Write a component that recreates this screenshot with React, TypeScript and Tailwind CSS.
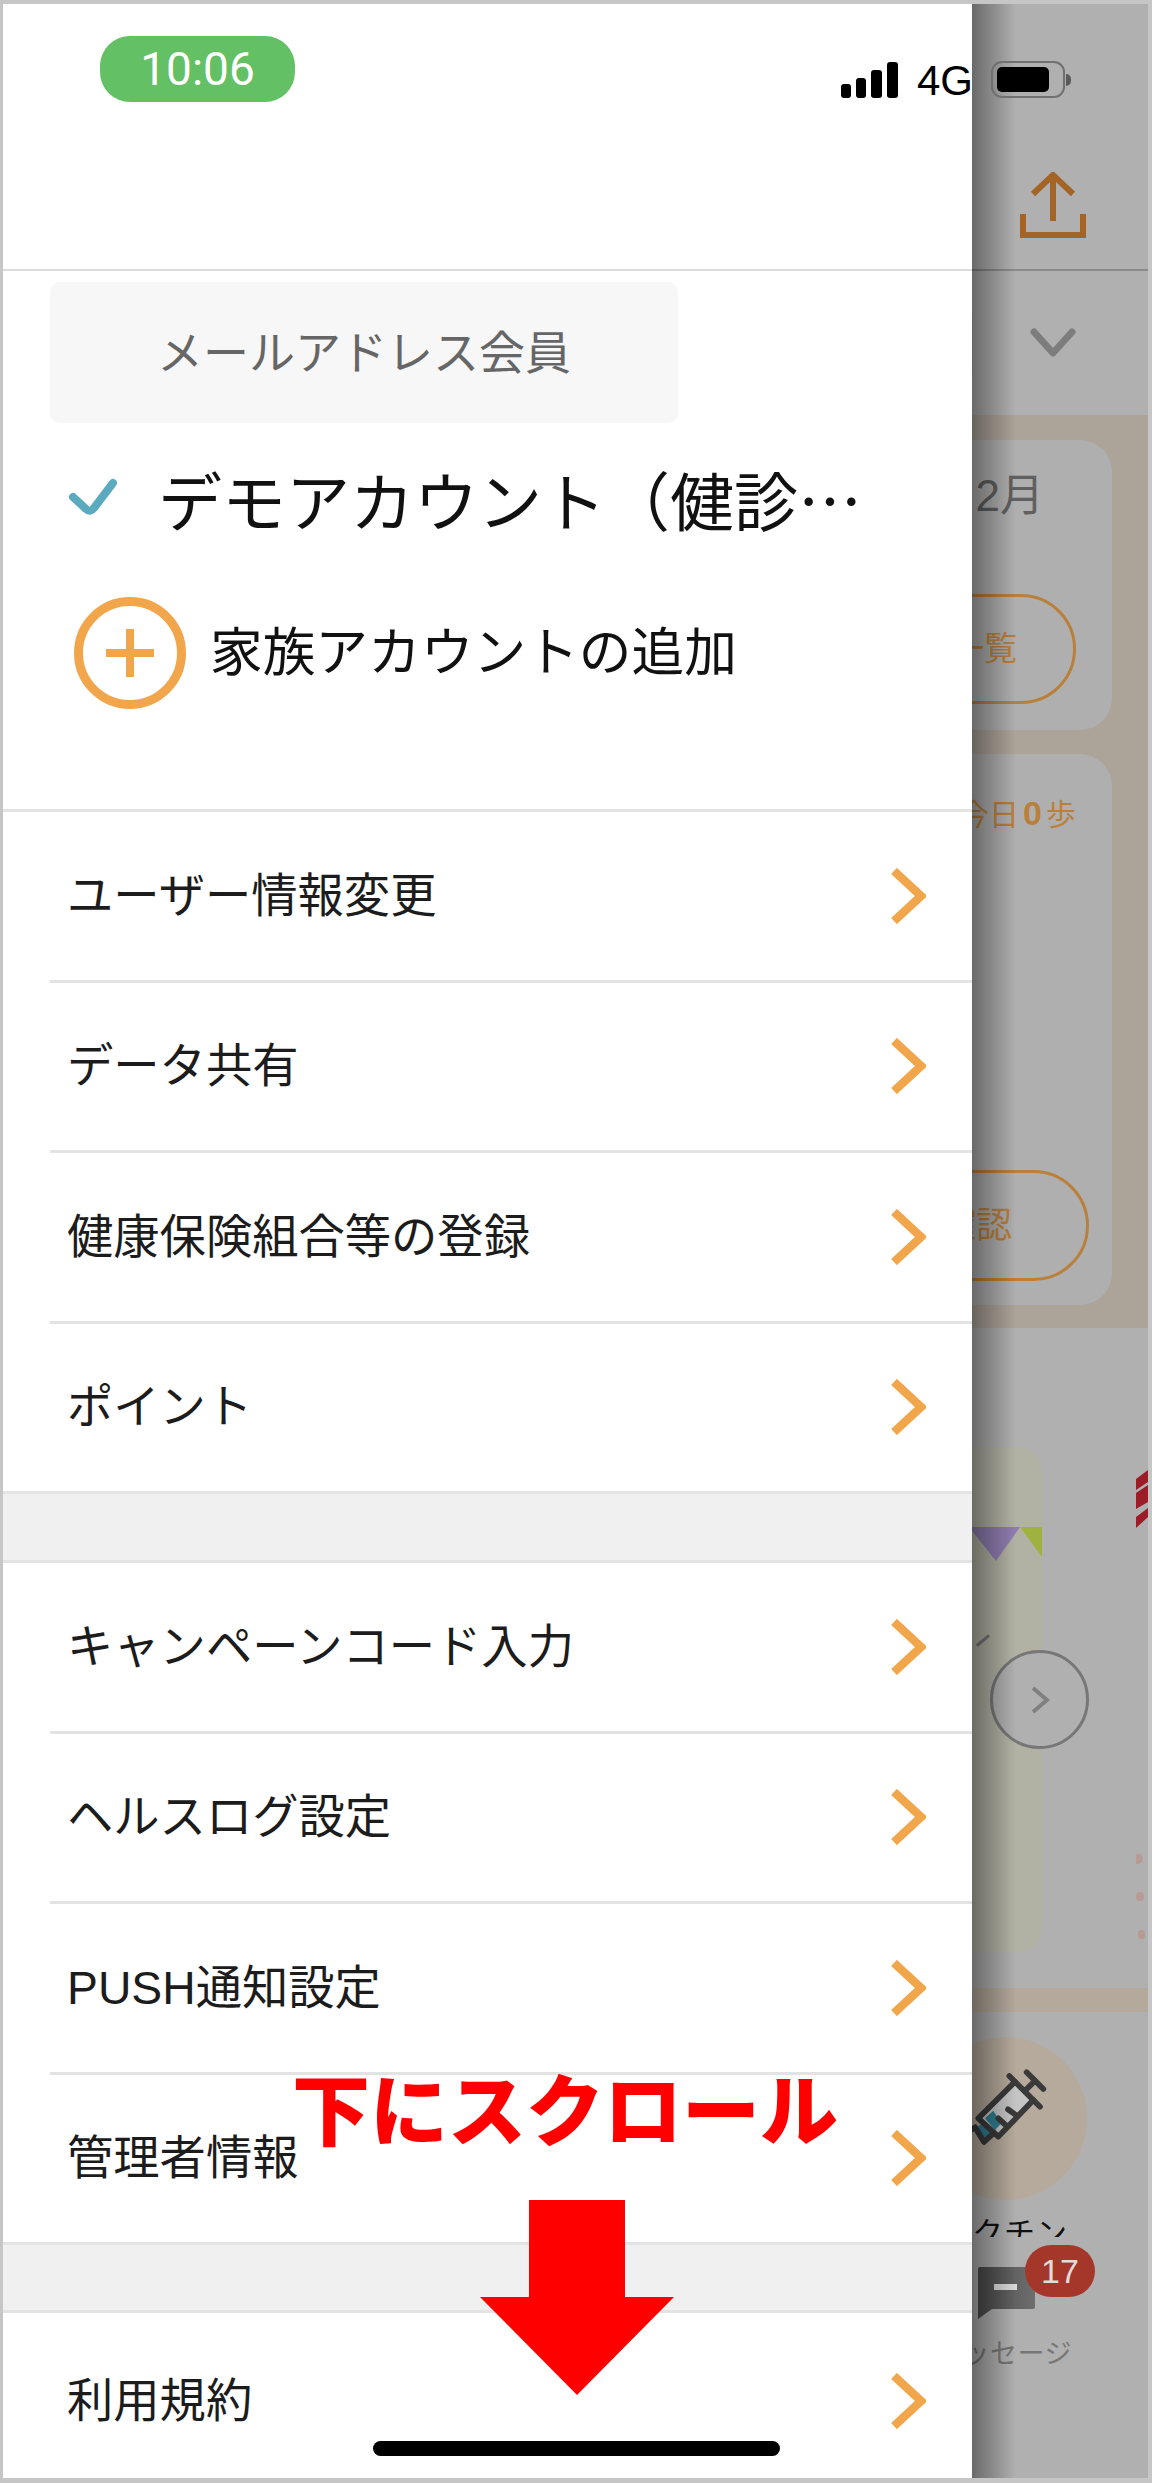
const sans = "font-['Liberation_Sans','Noto_Sans_CJK_JP',sans-serif]";

function Chevron() {
  return (
    <svg width="36" height="56" viewBox="0 0 36 56" fill="none" className="shrink-0">
      <path d="M4 3 L31 28 L4 53" stroke="#f2a64b" strokeWidth="8.5" />
    </svg>
  );
}

function Row({ label, full = false, last = false }: { label: string; full?: boolean; last?: boolean }) {
  return (
    <div className={full ? "" : "pl-[47px]"}>
      <div
        className={`flex items-center justify-between ${last ? "h-[176px]" : "h-[170.5px] border-b-[3px] border-[#e3e3e3]"} ${full ? "pl-[64px]" : "pl-[17px]"} pr-[46px]`}
      >
        <span className="text-[46.3px] leading-none text-[#1c1c1c]">{label}</span>
        <Chevron />
      </div>
    </div>
  );
}

function Background() {
  return (
    <div className={`flex h-full flex-col bg-[#b0b0b0] ${sans}`}>
      {/* header */}
      <div className="flex h-[267px] shrink-0 items-end justify-end border-b-[2px] border-[#8a8a8a] pb-[31px] pr-[62px]">
        <svg width="66" height="66" viewBox="0 0 66 66" fill="none" stroke="#a36426" strokeWidth="6">
          <path d="M33 3 V49 M13 22 L33 3 L53 22" />
          <path d="M3 42 V63 H63 V42" />
        </svg>
      </div>
      {/* selector */}
      <div className="flex h-[144px] shrink-0 items-center justify-between pr-[72px]">
        <div className="ml-[920px] h-[98px] w-[50px] rounded-full bg-[#a6a6a6]" />
        <svg width="46" height="30" viewBox="0 0 46 30" fill="none" stroke="#7d7d7d" strokeWidth="7" strokeLinecap="round" strokeLinejoin="round">
          <path d="M4 4 L23 25 L42 4" />
        </svg>
      </div>
      {/* beige summary section */}
      <div className="flex h-[913px] shrink-0 flex-col gap-[24px] bg-[#aca499] px-[36px] pt-[25px]">
        <div className="flex h-[290px] shrink-0 flex-col items-end rounded-[32px] bg-[#afafaf]">
          <span className="mr-[68px] mt-[34px] text-[44px] leading-none text-[#606060]">2月</span>
          <div className="mr-[36px] mt-[76px] flex h-[110px] w-[400px] items-center justify-end rounded-full border-[3px] border-[#b9803c] pr-[56px] text-[33px] text-[#b9803c]">
            一覧
          </div>
        </div>
        <div className="flex h-[551px] shrink-0 flex-col items-end rounded-[32px] bg-[#afafaf] pb-[24px]">
          <span className="mr-[36px] mt-[42px] flex items-baseline text-[30px] leading-none text-[#b9803c]">
            今日<b className="mx-[4px] text-[34px]">0</b>歩
          </span>
          <div className="mr-[23px] mt-auto flex h-[111px] w-[500px] items-center justify-end rounded-full border-[3px] border-[#b9803c] pr-[74px] text-[36px] text-[#b9803c]">
            確認
          </div>
        </div>
      </div>
      {/* carousel */}
      <div className="relative h-[660px] shrink-0 overflow-hidden">
        <div className="absolute left-[880px] top-[119px] h-[505px] w-[159px] rounded-[24px] bg-[#b2b2a4]">
          <svg width="159" height="40" viewBox="0 0 159 40" className="absolute left-0 top-[80px]">
            <path d="M86 0 H137 L113 34 Z" fill="#8f7db1" />
            <path d="M137 0 H159 V30 Z" fill="#9fb13f" />
          </svg>
          <div className="absolute left-[92px] top-[192px] h-[3px] w-[16px] -rotate-[40deg] bg-[#777]" />
        </div>
        <div className="absolute left-[987px] top-[322px] flex h-[99px] w-[99px] items-center justify-center rounded-full border-[3px] border-[#777] bg-[#b0b0b0]">
          <svg width="20" height="30" viewBox="0 0 20 30" fill="none" stroke="#808080" strokeWidth="4">
            <path d="M3 3 L17 15 L3 27" />
          </svg>
        </div>
        <svg width="12" height="58" viewBox="0 0 12 58" className="absolute right-0 top-[142px]">
          <path d="M0 9 L12 0 V12 L0 20 Z M0 23 L12 15 V32 L0 39 Z M0 47 L12 38 V47 L0 58 Z" fill="#9c1c28" />
        </svg>
        <div className="absolute left-[1133px] top-[526px] h-[10px] w-[7px] rounded-r-full bg-[#b89a94]" />
        <div className="absolute left-[1133px] top-[564px] h-[9px] w-[8px] rounded-full bg-[#b89a94]" />
        <div className="absolute left-[1135px] top-[602px] h-[9px] w-[7px] rounded-full bg-[#b89a94]" />
      </div>
      <div className="h-[24px] shrink-0 bg-[#b4a99b]" />
      {/* menu item, cut by the tab bar */}
      <div className="relative h-[225px] shrink-0 overflow-hidden">
        <div className="absolute left-[921px] top-[25px] h-[163px] w-[163px] rounded-full bg-[#b5aa9b]" />
        <svg width="140" height="140" viewBox="0 0 420 420" fill="none" className="absolute left-[957px] top-[28px]">
          <path d="M165 125 L55 235 L115 290 L220 180 Z" fill="#c5c5c5" />
          <path d="M75 235 L100 212 L124 250 L105 270 Z" fill="#2e7f93" />
          <path d="M50 262 L68 250 L95 282 L72 306 Z" fill="#2e7f93" />
          <g stroke="#3a3a3a" strokeWidth="17" strokeLinecap="round" strokeLinejoin="round">
            <path d="M200 97 L250 147" />
            <path d="M225 122 L195 152" />
            <path d="M148 108 L240 200" />
            <path d="M165 125 L55 235 L115 290 L220 180" />
            <path d="M172 228 L144 208 M142 260 L115 235" />
            <path d="M0 290 L45 262 L72 306 L100 280" />
          </g>
        </svg>
        <span className="absolute left-[937px] top-[206px] whitespace-nowrap text-[31px] leading-none tracking-[1px] text-[#111]">
          ワクチン
        </span>
      </div>
      {/* tab bar */}
      <div className="relative flex-1">
        <div className="absolute left-[975px] top-[30px]">
          <svg width="57" height="52" viewBox="0 0 57 52">
            <defs>
              <linearGradient id="msg" x1="0" x2="1" y1="0" y2="0">
                <stop offset="0" stopColor="#4c4c4c" />
                <stop offset="1" stopColor="#6e6e6e" />
              </linearGradient>
            </defs>
            <path d="M0 2 Q0 0 2 0 H55 Q57 0 57 2 V40 Q57 42 55 42 H14 L0 52 Z" fill="url(#msg)" />
            <rect x="16" y="17" width="23" height="6" fill="#d9d9d9" />
          </svg>
        </div>
        <div className="absolute left-[1022px] top-[8px] flex h-[52px] w-[70px] items-center justify-center rounded-full bg-[#a5372a] text-[34px] leading-none text-[#e0dcdc]">
          17
        </div>
        <span className="absolute left-[932px] top-[104px] whitespace-nowrap text-[27px] leading-none tracking-[0.5px] text-[#777]">
          メッセージ
        </span>
      </div>
    </div>
  );
}

function Drawer() {
  return (
    <div className={`absolute inset-y-0 left-0 w-[969px] overflow-visible bg-white ${sans}`}>
      <div className="pointer-events-none absolute inset-y-0 left-full w-[44px] bg-gradient-to-r from-black/40 to-transparent" />
      <div className="h-[267px] border-b-[2px] border-[#dcdcdc]" />
      <div className="ml-[47px] mt-[11px] flex h-[141px] w-[628px] items-center justify-center rounded-[10px] bg-[#f7f7f7] text-[46px] leading-none text-[#666]">
        メールアドレス会員
      </div>
      <div className="flex h-[154px] items-center pl-[65px] pb-[4px]">
        <svg width="50" height="40" viewBox="0 0 50 40" fill="none" className="shrink-0">
          <path d="M5 19 L18 31 Q22 35 26 30 L45 5" stroke="#5baabf" strokeWidth="8" strokeLinejoin="round" strokeLinecap="round" />
        </svg>
        <span className="ml-[40px] whitespace-nowrap font-['Noto_Sans_CJK_JP',sans-serif] text-[64px] leading-none text-[#111]">
          デモアカウント（健診…
        </span>
      </div>
      <div className="flex h-[152px] items-center pl-[71px]">
        <div className="flex h-[112px] w-[112px] shrink-0 items-center justify-center rounded-full border-[9px] border-[#f2a64b]">
          <svg width="50" height="50" viewBox="0 0 50 50" fill="none" stroke="#f2a64b" strokeWidth="8">
            <path d="M25 1 V49 M1 25 H49" />
          </svg>
        </div>
        <span className="ml-[24px] whitespace-nowrap text-[52.7px] leading-none text-[#111]">家族アカウントの追加</span>
      </div>
      <div className="mt-[80px] border-t-[3px] border-[#e3e3e3]" />
      <Row label="ユーザー情報変更" />
      <Row label="データ共有" />
      <Row label="健康保険組合等の登録" />
      <Row label="ポイント" full />
      <div className="h-[69px] border-b-[3px] border-[#e3e3e3] bg-[#f0f0f0]" />
      <Row label="キャンペーンコード入力" />
      <Row label="ヘルスログ設定" />
      <Row label="PUSH通知設定" />
      <Row label="管理者情報" full />
      <div className="h-[68px] border-b-[3px] border-[#e3e3e3] bg-[#f0f0f0]" />
      <Row label="利用規約" full last />
    </div>
  );
}

function StatusBar() {
  return (
    <div className="absolute inset-x-0 top-0 h-[110px]">
      <div className="absolute left-[97px] top-[32px] flex h-[66px] w-[195px] items-center justify-center rounded-[30px] bg-[#63c065] font-['Roboto',sans-serif] text-[46px] leading-none text-white">
        10:06
      </div>
      <div className="absolute left-[838px] top-[58px] flex h-[36px] items-end gap-[5px]">
        <div className="h-[14px] w-[10px] rounded-[3px] bg-black" />
        <div className="h-[20px] w-[10px] rounded-[3px] bg-black" />
        <div className="h-[28px] w-[11px] rounded-[3px] bg-black" />
        <div className="h-[36px] w-[11px] rounded-[3px] bg-black" />
      </div>
      <span className={`absolute left-[914px] top-[56px] text-[42px] leading-none text-black ${sans}`}>4G</span>
      <div className="absolute left-[988px] top-[57px] flex h-[37px] w-[74px] items-center rounded-[11px] border-[2px] border-[#707070] p-[4px]">
        <div className="h-full w-[52px] rounded-[5px] bg-black" />
      </div>
      <div className="absolute left-[1063px] top-[70px] h-[12px] w-[5px] rounded-r-full bg-[#5a5a5a]" />
    </div>
  );
}

export default function App() {
  return (
    <div className="h-[2483px] w-[1152px] border-b-[5px] border-l-[3px] border-r-[4px] border-t-[4px] border-[#c6c6c6] bg-white">
      <div className="relative h-full w-full overflow-hidden">
        <Background />
        <Drawer />
        <StatusBar />
        <div className={`absolute left-[289px] top-[2070px] whitespace-nowrap text-[78px] font-black leading-none text-[#ff0000] ${sans}`}>
          下にスクロール
        </div>
        <svg width="194" height="195" viewBox="0 0 194 195" className="absolute left-[477px] top-[2196px]">
          <path d="M49 0 H145 V97 H194 L97 195 L0 97 H49 Z" fill="#ff0000" />
        </svg>
        <div className="absolute left-[370px] top-[2437px] h-[15px] w-[407px] rounded-full bg-black" />
      </div>
    </div>
  );
}
